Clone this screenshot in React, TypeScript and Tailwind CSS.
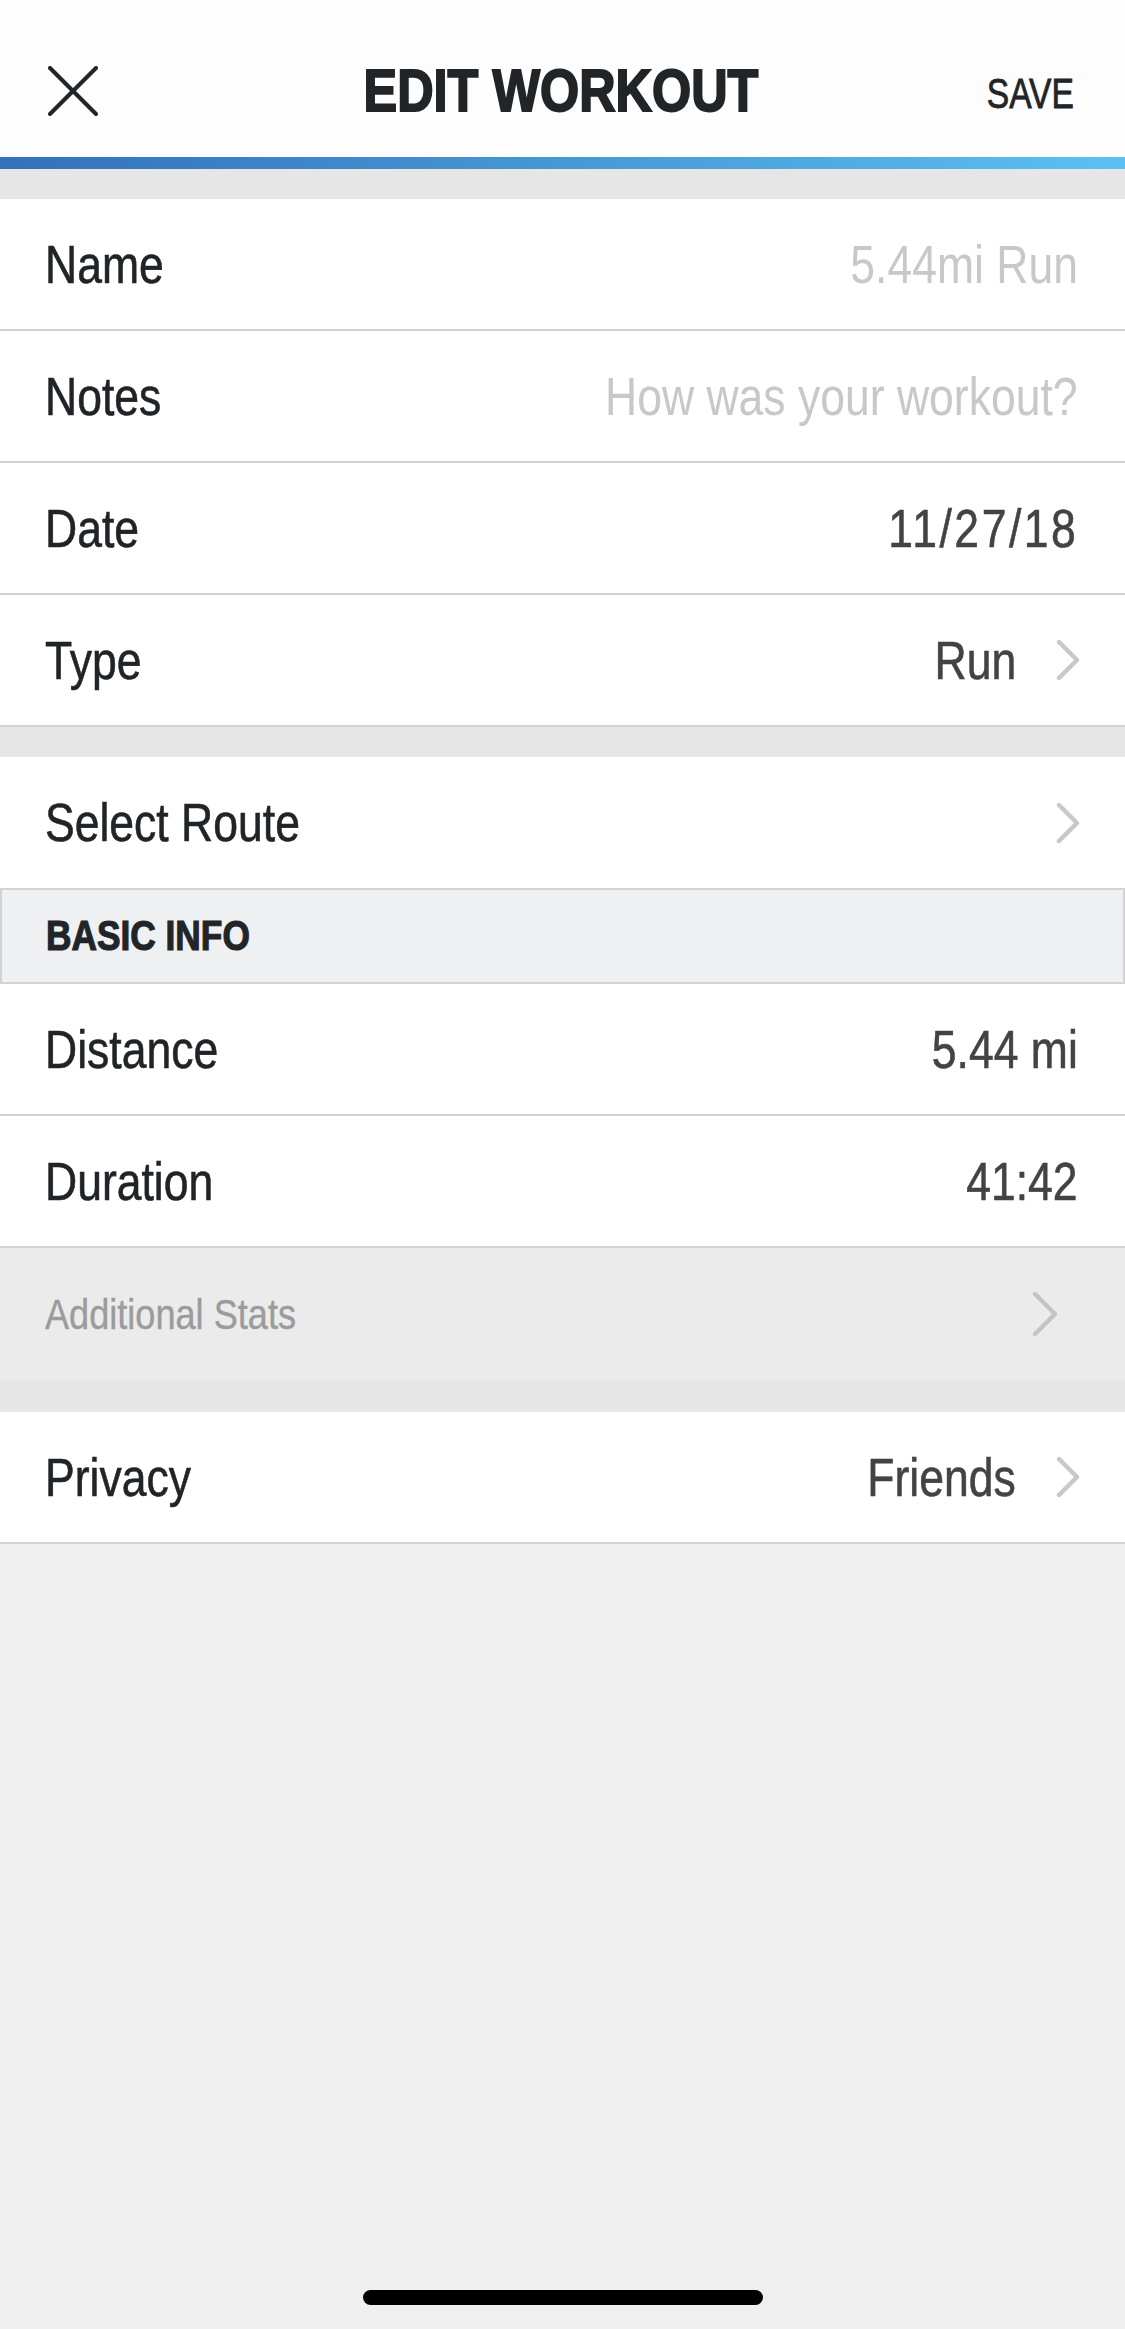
import React from "react";

const font = "font-['Liberation_Sans','Arial',sans-serif]";

function Chevron({ className = "" }: { className?: string }) {
  return (
    <svg width="24" height="40" viewBox="0 0 24 40" className={className} fill="none">
      <polyline points="3,2 21,20 3,38" stroke="currentColor" strokeWidth="4.5" strokeLinecap="round" strokeLinejoin="round" />
    </svg>
  );
}

interface RowProps {
  label: string;
  value?: string;
  muted?: boolean;
  chevron?: boolean;
  wide?: boolean;
}

function Row({ label, value, muted = false, chevron = false, wide = false }: RowProps) {
  return (
    <div className="h-[132px] bg-white border-b-2 border-[#d1d1d6] flex items-center justify-between pl-[45px] pr-[45px]">
      <span className="inline-block origin-left scale-x-[0.84] text-[53px] leading-none text-[#212427] whitespace-nowrap [-webkit-text-stroke:0.6px_#212427]">
        {label}
      </span>
      <div className="flex items-center gap-[40px]">
        {value && (
          <span
            className={`inline-block origin-right scale-x-[0.84] text-[53px] leading-none whitespace-nowrap ${
              muted ? "text-[#c7c7cc]" : "text-[#434343] [-webkit-text-stroke:0.6px_#434343]"
            } ${chevron ? "" : "mr-[2px]"} ${wide ? "tracking-[3px]" : ""}`}
          >
            {value}
          </span>
        )}
        {chevron && <Chevron className="text-[#c7c7cc]" />}
      </div>
    </div>
  );
}

export default function App() {
  return (
    <div className={`w-[1125px] min-h-[2329px] bg-[#efefef] flex flex-col ${font}`}>
      <header className="h-[157px] bg-[#fdfdfd] grid grid-cols-[1fr_auto_1fr] items-center pl-[48px] pr-[51px] pt-[24px]">
        <svg width="50" height="50" viewBox="0 0 50 50" fill="none">
          <line x1="2" y1="2" x2="48" y2="48" stroke="#222528" strokeWidth="4" strokeLinecap="round" />
          <line x1="48" y1="2" x2="2" y2="48" stroke="#222528" strokeWidth="4" strokeLinecap="round" />
        </svg>
        <h1 className="inline-block origin-center scale-x-[0.84] text-[60px] leading-none font-bold text-[#222528] whitespace-nowrap [-webkit-text-stroke:2px_#222528]">
          EDIT WORKOUT
        </h1>
        <span className="justify-self-end inline-block origin-right scale-x-[0.8] text-[42px] leading-none text-[#222528] mt-[6px] [-webkit-text-stroke:0.8px_#222528]">
          SAVE
        </span>
      </header>
      <div className="h-[12px] bg-linear-to-r from-[#3471b8] to-[#5cc0f2]" />
      <div className="h-[30px] bg-[#e6e6e6]" />

      <Row label="Name" value="5.44mi Run" muted />
      <Row label="Notes" value="How was your workout?" muted />
      <Row label="Date" value="11/27/18" wide />
      <Row label="Type" value="Run" chevron />

      <div className="h-[30px] bg-[#e6e6e6]" />

      <div className="h-[131px] bg-white flex items-center justify-between pl-[45px] pr-[45px]">
        <span className="inline-block origin-left scale-x-[0.84] text-[53px] leading-none text-[#212427] whitespace-nowrap [-webkit-text-stroke:0.6px_#212427]">
          Select Route
        </span>
        <Chevron className="text-[#c7c7cc]" />
      </div>

      <div className="h-[96px] bg-[#eff0f2] border-2 border-[#d1d1d6] flex items-center pl-[44px]">
        <span className="inline-block origin-left scale-x-[0.84] text-[42px] leading-none font-bold text-[#222528] whitespace-nowrap [-webkit-text-stroke:1.2px_#222528]">
          BASIC INFO
        </span>
      </div>

      <Row label="Distance" value="5.44 mi" />
      <Row label="Duration" value="41:42" />

      <div className="h-[132px] bg-[#ebebeb] flex items-center justify-between pl-[45px] pr-[67px]">
        <span className="inline-block origin-left scale-x-[0.84] text-[43px] leading-none text-[#9b9b9b] whitespace-nowrap [-webkit-text-stroke:0.4px_#9b9b9b]">
          Additional Stats
        </span>
        <svg width="26" height="44" viewBox="0 0 26 44" fill="none" className="text-[#c4c4c4]">
          <polyline points="3,2 23,22 3,42" stroke="currentColor" strokeWidth="4.5" strokeLinecap="round" strokeLinejoin="round" />
        </svg>
      </div>
      <div className="h-[32px] bg-[#e6e6e6]" />

      <Row label="Privacy" value="Friends" chevron />

      <div className="flex-1 flex items-end justify-center pb-[24px]">
        <div className="w-[400px] h-[15px] rounded-full bg-black" />
      </div>
    </div>
  );
}
